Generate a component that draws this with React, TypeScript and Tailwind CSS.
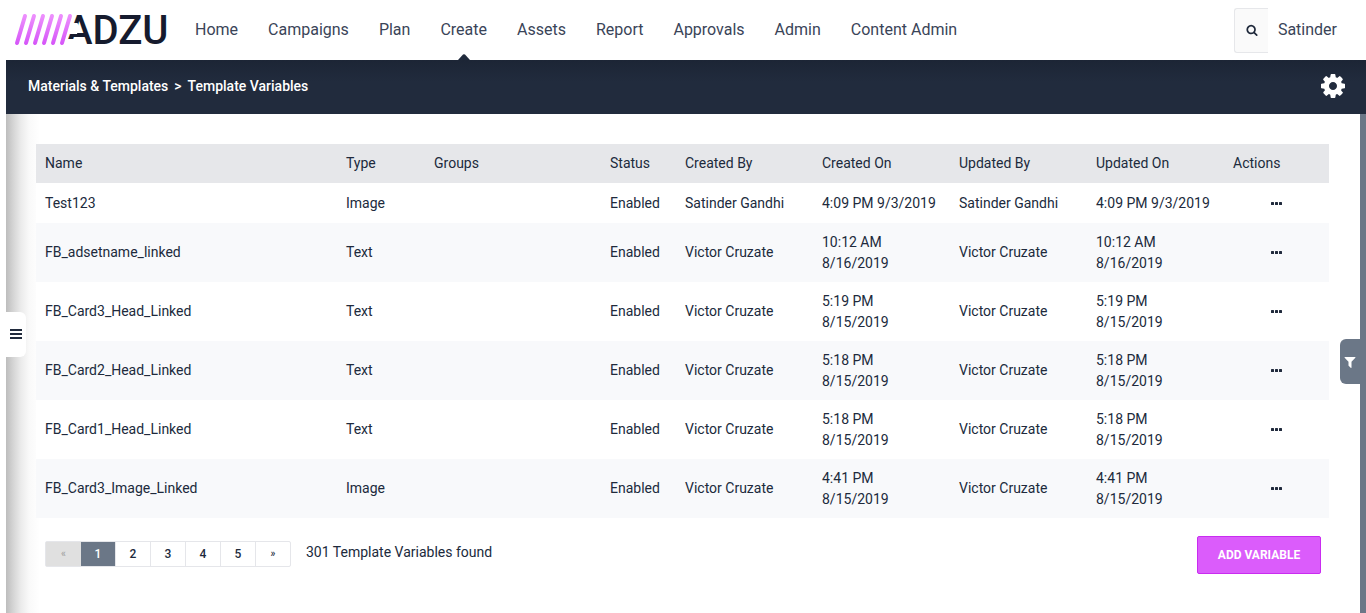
import React from "react";

type Row = {
  name: string;
  type: string;
  by: string;
  time: string;
  date: string;
};

const rows: Row[] = [
  { name: "Test123", type: "Image", by: "Satinder Gandhi", time: "4:09 PM", date: "9/3/2019" },
  { name: "FB_adsetname_linked", type: "Text", by: "Victor Cruzate", time: "10:12 AM", date: "8/16/2019" },
  { name: "FB_Card3_Head_Linked", type: "Text", by: "Victor Cruzate", time: "5:19 PM", date: "8/15/2019" },
  { name: "FB_Card2_Head_Linked", type: "Text", by: "Victor Cruzate", time: "5:18 PM", date: "8/15/2019" },
  { name: "FB_Card1_Head_Linked", type: "Text", by: "Victor Cruzate", time: "5:18 PM", date: "8/15/2019" },
  { name: "FB_Card3_Image_Linked", type: "Image", by: "Victor Cruzate", time: "4:41 PM", date: "8/15/2019" },
];

const columns = [
  { label: "Name", width: "" },
  { label: "Type", width: "w-[88px]" },
  { label: "Groups", width: "w-[176px]" },
  { label: "Status", width: "w-[75px]" },
  { label: "Created By", width: "w-[137px]" },
  { label: "Created On", width: "w-[137px]" },
  { label: "Updated By", width: "w-[137px]" },
  { label: "Updated On", width: "w-[137px]" },
  { label: "Actions", width: "w-[105px]" },
];

const navItems = ["Home", "Campaigns", "Plan", "Create", "Assets", "Report", "Approvals", "Admin", "Content Admin"];

function Logo() {
  return (
    <svg width="156" height="60" viewBox="14 0 156 60" role="img" aria-label="ADZU">
      <defs>
        <linearGradient id="slash" gradientUnits="userSpaceOnUse" x1="0" y1="14" x2="0" y2="46">
          <stop offset="0" stopColor="#ee92fd" />
          <stop offset="1" stopColor="#d452f8" />
        </linearGradient>
      </defs>
      <text x="66" y="44" fill="#161b2e" fontFamily="Roboto, sans-serif" fontSize="40" fontWeight="500">
        ADZU
      </text>
      <path d="M64 23H77.500L79 27L77 34H64ZM64 39H76V47H64Z" fill="#fff" />
      <g stroke="url(#slash)" strokeWidth="4" strokeLinecap="round">
        {[0, 9, 18, 27, 36, 45].map((x) => (
          <line key={x} x1={17 + x} y1="43" x2={25 + x} y2="16" />
        ))}
      </g>
    </svg>
  );
}

function SearchIcon() {
  return (
    <svg width="12" height="12" viewBox="0 0 1792 1792" fill="currentColor" aria-hidden="true">
      <path d="M1216 832q0-185-131.500-316.500t-316.500-131.500-316.500 131.500-131.500 316.500 131.500 316.500 316.500 131.500 316.500-131.500 131.500-316.500zm512 832q0 52-38 90t-90 38q-54 0-90-38l-343-342q-179 124-399 124-143 0-273.500-55.500t-225-150-150-225-55.500-273.500 55.500-273.500 150-225 225-150 273.500-55.500 273.500 55.500 225 150 150 225 55.500 273.500q0 220-124 399l343 343q37 37 37 90z" />
    </svg>
  );
}

function CogIcon() {
  return (
    <svg width="28" height="28" viewBox="0 0 1792 1792" fill="currentColor" aria-hidden="true">
      <path d="M1152 896q0-106-75-181t-181-75-181 75-75 181 75 181 181 75 181-75 75-181zm512-109v222q0 12-8 23t-20 13l-185 28q-19 54-39 91 35 50 107 138 10 12 10 25t-9 23q-27 37-99 108t-94 71q-12 0-26-9l-138-108q-44 23-91 38-16 136-29 186-7 28-36 28h-222q-14 0-24.500-8.500t-11.500-21.500l-28-184q-49-16-90-37l-141 107q-10 9-25 9-14 0-25-11-126-114-165-168-7-10-7-23 0-12 8-23 15-21 51-66.500t54-70.500q-27-50-41-99l-183-27q-13-2-21-12.500t-8-23.500v-222q0-12 8-23t19-13l186-28q14-46 39-92-40-57-107-138-10-12-10-24 0-10 9-23 26-36 98.500-107.500t94.500-71.500q13 0 26 10l138 107q44-23 91-38 16-136 29-186 7-28 36-28h222q14 0 24.500 8.500t11.500 21.500l28 184q49 16 90 37l142-107q9-9 24-9 13 0 25 10 129 119 165 170 7 8 7 22 0 12-8 23-15 21-51 66.500t-54 70.500q26 50 41 98l183 28q13 2 21 12.500t8 23.500z" />
    </svg>
  );
}

function FilterIcon() {
  return (
    <svg width="14" height="14" viewBox="0 0 1792 1792" fill="currentColor" aria-hidden="true">
      <path d="M1595 295q17 41-14 70l-493 493v742q0 42-39 59-13 5-25 5-27 0-45-19l-256-256q-19-19-19-45v-486l-493-493q-31-29-14-70 17-39 59-39h1280q42 0 59 39z" />
    </svg>
  );
}

function BarsIcon() {
  return (
    <svg width="12" height="10" viewBox="0 0 12 10" fill="currentColor" aria-hidden="true">
      <rect width="12" height="2" />
      <rect y="4" width="12" height="2" />
      <rect y="8" width="12" height="2" />
    </svg>
  );
}

function DotsIcon() {
  return (
    <svg width="12" height="3" viewBox="0 0 12 3" fill="currentColor" aria-hidden="true">
      <rect width="3" height="3" rx="0.500" />
      <rect x="4" width="3" height="3" rx="0.500" />
      <rect x="8" width="3" height="3" rx="0.500" />
    </svg>
  );
}

function Header() {
  return (
    <header className="flex h-15 items-center pl-3.5 pr-[29px] text-base text-[#3a4458]">
      <a href="#" className="mr-[25px] shrink-0">
        <Logo />
      </a>
      <nav className="flex h-full flex-1 gap-[30px]">
        {navItems.map((item) => (
          <a key={item} href="#" className="relative flex h-full items-center whitespace-nowrap">
            {item}
            {item === "Create" && (
              <svg className="absolute bottom-0 left-1/2 -translate-x-1/2" width="12" height="6" viewBox="0 0 12 6" aria-hidden="true">
                <path d="M0 6L5 .6Q6-.2 7 .6L12 6Z" fill="#202a3c" />
              </svg>
            )}
          </a>
        ))}
      </nav>
      <button
        type="button"
        aria-label="Search"
        className="mr-2.5 flex h-[45px] w-[34px] items-center justify-center rounded-l-[3px] border border-r-0 border-[#e6e7ea] bg-[#fafafa] pl-px text-[#1f293b]"
      >
        <SearchIcon />
      </button>
      <a href="#">Satinder</a>
    </header>
  );
}

function Pagination() {
  return (
    <nav aria-label="Pages" className="flex h-[26px] rounded-xs border border-[#e5e6ea] text-xs font-medium">
      <button type="button" disabled aria-label="Previous" className="w-[35px] bg-[#e0e0e0] text-[10px] text-[#a3a3a3]">
        «
      </button>
      {["1", "2", "3", "4", "5"].map((n) => (
        <button
          key={n}
          type="button"
          className={
            n === "1"
              ? "w-[35px] border-r border-[#e5e6ea] bg-[#6b7787] text-white"
              : "w-[35px] border-r border-[#e5e6ea]"
          }
        >
          {n}
        </button>
      ))}
      <button type="button" aria-label="Next" className="w-[34px] text-[10px]">
        »
      </button>
    </nav>
  );
}

export default function App() {
  return (
    <div className="flex min-h-screen flex-col bg-white font-['Roboto',sans-serif] text-sm leading-[21px] text-[#202a3c]">
      <Header />
      <div className="relative ml-1.5 flex flex-1 flex-col">
        <div className="flex h-[54px] items-center justify-between bg-linear-to-b from-[#1c2535] to-[#212b3d] to-40% pb-0.5 pl-[22px] pr-[19px] text-white">
          <h1 className="flex gap-1.5 font-medium">
            <span>Materials &amp; Templates</span>
            <span>&gt;</span>
            <span>Template Variables</span>
          </h1>
          <button type="button" aria-label="Settings">
            <CogIcon />
          </button>
        </div>

        <main className="flex-1 border-r-[6px] border-[#6b7787] bg-[linear-gradient(to_right,#bdbdbd,#d4d4d4_7px,#ebebeb_15px,#f9f9f9_23px,#ffffff_34px)] pb-8 pl-[30px] pr-[31px] pt-[30px]">
          <table className="w-full table-fixed border-collapse text-left">
            <thead>
              <tr className="h-[39px] bg-[#e6e7ea]">
                {columns.map((c) => (
                  <th key={c.label} scope="col" className={`${c.width} px-[9px] font-normal`}>
                    {c.label}
                  </th>
                ))}
              </tr>
            </thead>
            <tbody>
              {rows.map((r, i) => (
                <tr key={r.name} className={i === 0 ? "h-10 bg-white" : i % 2 ? "h-[59px] bg-[#f8f9fb]" : "h-[59px] bg-white"}>
                  <td className="px-[9px]">{r.name}</td>
                  <td className="px-[9px]">{r.type}</td>
                  <td className="px-[9px]" />
                  <td className="px-[9px]">Enabled</td>
                  <td className="px-[9px]">{r.by}</td>
                  <td className="px-[9px]">
                    {r.time} {i > 0 && <br />}
                    {r.date}
                  </td>
                  <td className="px-[9px]">{r.by}</td>
                  <td className="px-[9px]">
                    {r.time} {i > 0 && <br />}
                    {r.date}
                  </td>
                  <td className="px-[9px]">
                    <button type="button" aria-label={`Actions for ${r.name}`} className="mx-auto flex h-5 items-center pl-px">
                      <DotsIcon />
                    </button>
                  </td>
                </tr>
              ))}
            </tbody>
          </table>

          <div className="flex items-start pl-[9px] pr-2 pt-[18px]">
            <div className="mt-[5px] flex items-start">
              <Pagination />
              <p className="ml-[15px] mt-px">301 Template Variables found</p>
            </div>
            <button
              type="button"
              className="ml-auto h-[38px] w-[124px] rounded-xs border border-[#c92cf0] bg-[#db5cfb] text-xs font-bold text-white"
            >
              ADD VARIABLE
            </button>
          </div>
        </main>

        <button
          type="button"
          aria-label="Open menu"
          className="absolute left-0 top-[252px] flex h-[45px] w-5 items-center rounded-r-md bg-white pb-px pl-1"
        >
          <BarsIcon />
        </button>
        <button
          type="button"
          aria-label="Filter"
          className="absolute right-0 top-[279px] flex h-[45px] w-[26px] items-center rounded-l-md bg-[#6b7787] pl-[3px] text-white"
        >
          <FilterIcon />
        </button>
      </div>
    </div>
  );
}
